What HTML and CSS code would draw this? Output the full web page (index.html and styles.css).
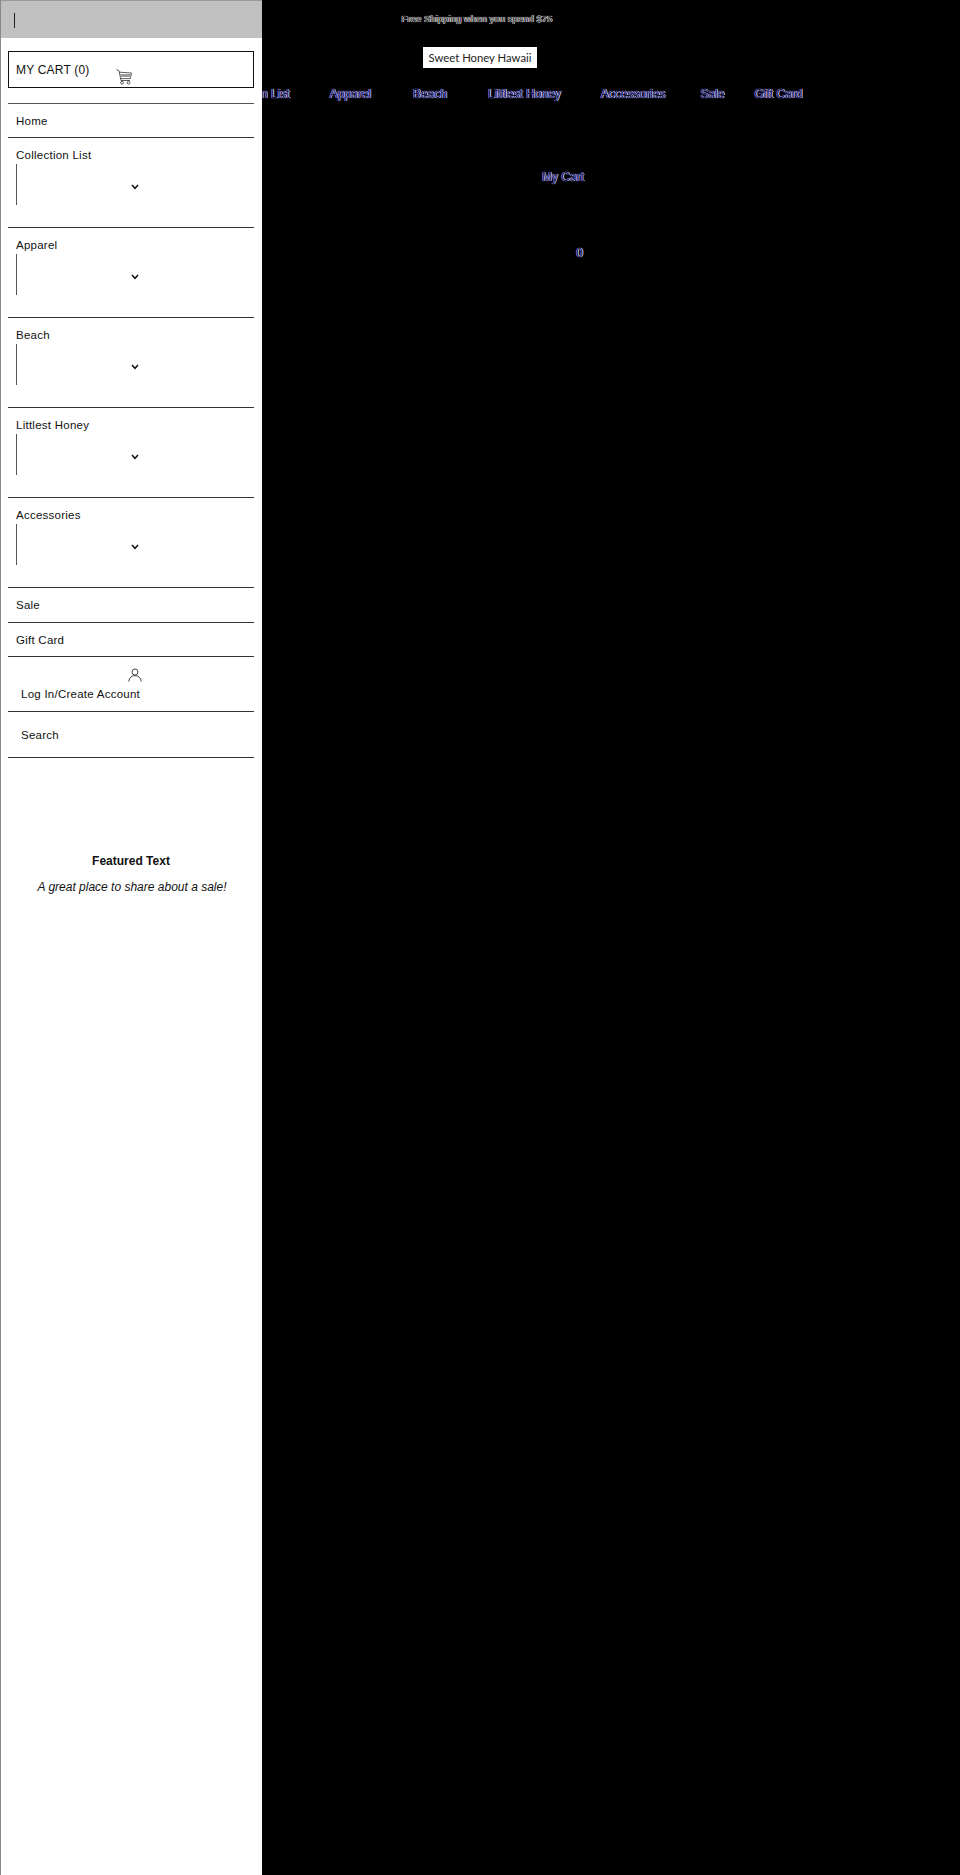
FILE: index.html
```html
<!DOCTYPE html>
<html lang="en">
<head>
<meta charset="utf-8">
<title>Sweet Honey Hawaii</title>
<link rel="stylesheet" href="styles.css">
</head>
<body>
<aside class="drawer">
  <div class="drawer-head"><span class="cursor"></span></div>
  <div class="drawer-body">
    <a class="cart-box">MY CART (0)
      <svg class="cart-icon" viewBox="0 0 16 16" width="16" height="16" fill="none" stroke="#333" stroke-width=".8"><path d="M.5 .7 3 1.8 5 11.5H14"/><path d="M3.4 3.2 15.5 4 14.3 9.6 4.6 9.6"/><path d="M4 6.5H15" stroke="#999" stroke-width="3"/><circle cx="6" cy="13.7" r="1.4"/><circle cx="12.6" cy="13.7" r="1.4"/></svg>
    </a>
    <ul class="menu">
      <li class="row row-home">Home</li>
      <li class="row row-drop">Collection List<span class="drop"><svg class="chev" viewBox="0 0 8 6" width="8" height="6"><path d="M1 1 4 4.3 7 1" fill="none" stroke="#111" stroke-width="1.5"/></svg></span></li>
      <li class="row row-drop">Apparel<span class="drop"><svg class="chev" viewBox="0 0 8 6" width="8" height="6"><path d="M1 1 4 4.3 7 1" fill="none" stroke="#111" stroke-width="1.5"/></svg></span></li>
      <li class="row row-drop">Beach<span class="drop"><svg class="chev" viewBox="0 0 8 6" width="8" height="6"><path d="M1 1 4 4.3 7 1" fill="none" stroke="#111" stroke-width="1.5"/></svg></span></li>
      <li class="row row-drop">Littlest Honey<span class="drop"><svg class="chev" viewBox="0 0 8 6" width="8" height="6"><path d="M1 1 4 4.3 7 1" fill="none" stroke="#111" stroke-width="1.5"/></svg></span></li>
      <li class="row row-drop">Accessories<span class="drop"><svg class="chev" viewBox="0 0 8 6" width="8" height="6"><path d="M1 1 4 4.3 7 1" fill="none" stroke="#111" stroke-width="1.5"/></svg></span></li>
      <li class="row row-sale">Sale</li>
      <li class="row row-gift">Gift Card</li>
      <li class="row row-login">
        <svg class="user-icon" viewBox="0 0 14 14" width="14" height="14" fill="none" stroke="#444" stroke-width="1"><circle cx="7" cy="4" r="3"/><path d="M.7 13.5C1.2 9.8 3.5 7.6 7 7.6S12.8 9.8 13.3 13.5"/></svg>
        <span>Log In/Create Account</span>
      </li>
      <li class="row row-search">Search</li>
    </ul>
    <div class="featured">
      <h3 class="featured-title">Featured Text</h3>
      <p class="featured-copy">A great place to share about a sale!</p>
    </div>
  </div>
</aside>
<main class="page">
  <p class="announce">Free Shipping when you spend $75</p>
  <a class="logo">Sweet Honey Hawaii</a>
  <nav class="nav ghost">
    <a class="nav-first">Collection List</a>
    <a class="nav-a">Apparel</a>
    <a class="nav-b">Beach</a>
    <a class="nav-l">Littlest Honey</a>
    <a class="nav-c">Accessories</a>
    <a class="nav-s">Sale</a>
    <a class="nav-g">Gift Card</a>
  </nav>
  <div class="mini ghost">
    <p class="mini-title">My Cart</p>
    <p class="mini-count">0</p>
  </div>
</main>
</body>
</html>
```
FILE: styles.css
```css
* { box-sizing: border-box; }
html, body { margin: 0; padding: 0; }
body { background: #000; height: 1875px; overflow: hidden; font-family: "Liberation Sans", Arial, sans-serif; color: #111; position: relative; }
p, h3, ul { margin: 0; padding: 0; }
ul { list-style: none; }

.drawer { position: absolute; left: 0; top: 0; width: 262px; height: 1875px; background: #fff; border-left: 1px solid #888; }
.drawer-head { height: 38px; background: #c0c0c0; border-top: 1px solid #999; padding: 12px 0 0 13px; }
.cursor { display: block; width: 1px; height: 15px; background: #222; }
.drawer-body { padding: 13px 8px 0 7px; }
.cart-box { display: block; height: 37px; border: 1px solid #111; padding: 10px 7px; font-size: 12px; letter-spacing: .2px; line-height: 16px; position: relative; }
.cart-icon { position: absolute; left: 107px; top: 17px; }
.menu { margin-top: 15px; border-top: 1px solid #555; font-size: 11.5px; letter-spacing: .25px; line-height: 16px; }
.row { border-bottom: 1px solid #333; padding: 9px 8px 0; }
.row-home { height: 34px; }
.row-drop { height: 90px; }
.row-sale { height: 35px; }
.row-gift { height: 34px; }
.drop { display: flex; align-items: center; height: 41px; margin-top: 1px; border-left: 1px solid #555; padding: 4px 0 0 114px; }
.row-login { height: 55px; padding: 11px 13px 0; }
.row-login span { display: block; margin-top: 4px; }
.user-icon { display: block; margin-left: 107px; }
.row-search { height: 46px; padding: 15px 13px 0; }
.featured { text-align: center; margin-top: 95px; }
.featured-title { font-size: 12px; line-height: 16px; font-weight: 700; }
.featured-copy { font-size: 12px; line-height: 16px; font-style: italic; margin-top: 10px; padding-left: 2px; }

.page { padding-top: 12px; }
.ghost { color: #14144a; text-shadow: .6px 0 0 #e8e8ff, -.6px 0 0 #7a7aff, 0 0 1px #9090ff, 0 0 1px #9090ff; }
.announce { font-size: 9.6px; line-height: 14px; text-align: center; color: #222; text-shadow: .5px 0 0 #fff, -.5px 0 0 #eee, 0 0 1px #fff; margin-left: -6px; }
.logo { display: block; width: 114px; height: 21px; margin: 21px 0 0 423px; background: #fff; color: #222; font-family: Lato, sans-serif; font-size: 11.3px; line-height: 21px; text-align: center; white-space: nowrap; }
.nav { display: flex; margin-top: 18px; font-size: 12px; line-height: 16px; padding-left: 215px; white-space: nowrap; }
.nav-a { margin-left: 40px; }
.nav-b { margin-left: 42px; }
.nav-l { margin-left: 41px; }
.nav-c { margin-left: 40px; }
.nav-s { margin-left: 35px; }
.nav-g { margin-left: 30px; }
.mini { margin: 67px 0 0; width: 584px; text-align: right; font-size: 12px; line-height: 16px; }
.mini-count { margin-top: 60px; padding-right: 1px; }
```
